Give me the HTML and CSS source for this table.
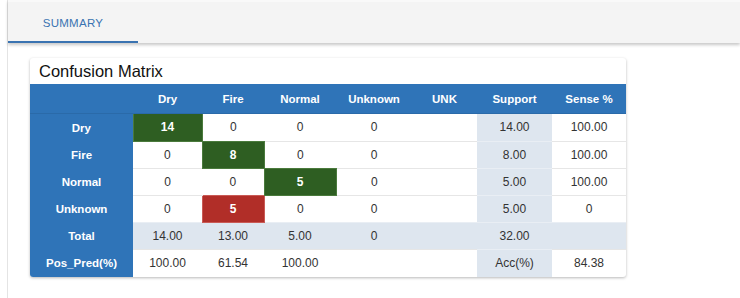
FILE: index.html
```html
<!DOCTYPE html>
<html>
<head>
<meta charset="utf-8">
<link rel="stylesheet" href="styles.css">
</head>
<body>
<div class="page">
  <div class="tabbar">
    <div class="tab">SUMMARY</div>
  </div>
  <div class="card">
    <div class="card-title">Confusion Matrix</div>
    <table class="cm">
      <colgroup>
        <col class="c-label"><col class="c-dry"><col class="c-fire"><col class="c-normal"><col class="c-unknown"><col class="c-unk"><col class="c-support"><col class="c-sense">
      </colgroup>
      <thead>
        <tr><th></th><th>Dry</th><th>Fire</th><th>Normal</th><th>Unknown</th><th>UNK</th><th>Support</th><th>Sense %</th></tr>
      </thead>
      <tbody>
        <tr><th>Dry</th><td class="good">14</td><td>0</td><td>0</td><td>0</td><td></td><td class="sup">14.00</td><td>100.00</td></tr>
        <tr><th>Fire</th><td>0</td><td class="good">8</td><td>0</td><td>0</td><td></td><td class="sup">8.00</td><td>100.00</td></tr>
        <tr><th>Normal</th><td>0</td><td>0</td><td class="good">5</td><td>0</td><td></td><td class="sup">5.00</td><td>100.00</td></tr>
        <tr><th>Unknown</th><td>0</td><td class="bad">5</td><td>0</td><td>0</td><td></td><td class="sup">5.00</td><td>0</td></tr>
        <tr class="total"><th>Total</th><td>14.00</td><td>13.00</td><td>5.00</td><td>0</td><td></td><td>32.00</td><td></td></tr>
        <tr class="last"><th>Pos_Pred(%)</th><td>100.00</td><td>61.54</td><td>100.00</td><td></td><td></td><td class="sup">Acc(%)</td><td>84.38</td></tr>
      </tbody>
    </table>
  </div>
</div>
</body>
</html>
```
FILE: styles.css
```css
html, body {
  margin: 0;
  padding: 0;
  background: #ffffff;
  font-family: "Liberation Sans", Arial, sans-serif;
}
.page {
  margin-left: 7px;
  border-left: 1px solid #e4e4e4;
  min-height: 298px;
  box-sizing: border-box;
}
.tabbar {
  height: 43px;
  background: #f4f4f4;
  border-top: 2px solid #f9f9f9;
  box-sizing: border-box;
  box-shadow: 0 2px 3px rgba(0, 0, 0, 0.22);
  display: flex;
  align-items: stretch;
}
.tab {
  width: 130px;
  display: flex;
  align-items: center;
  justify-content: center;
  font-size: 11.5px;
  letter-spacing: 0.3px;
  color: #3a73b1;
  border-bottom: 2px solid #3a73b1;
  box-sizing: border-box;
  padding-top: 2px;
}
.card {
  margin-top: 15px;
  margin-left: 22px;
  width: 596px;
  background: #fff;
  border-radius: 3px;
  box-shadow: 0 1px 3px rgba(0, 0, 0, 0.28);
  overflow: hidden;
}
.card-title {
  height: 26px;
  padding-left: 9px;
  font-size: 16.5px;
  line-height: 27px;
  color: #111;
  box-sizing: border-box;
}
.cm {
  border-collapse: collapse;
  table-layout: fixed;
  width: 596px;
  font-size: 12px;
}
.c-label { width: 103px; }
.c-dry { width: 69px; }
.c-fire { width: 62px; }
.c-normal { width: 72px; }
.c-unknown { width: 76px; }
.c-unk { width: 65px; }
.c-support { width: 75px; }
.c-sense { width: 74px; }
.cm th, .cm td {
  padding: 0;
  text-align: center;
  vertical-align: middle;
}
.cm thead th {
  height: 29px;
  background: #2f74b8;
  color: #fff;
  font-weight: 700;
  font-size: 11.5px;
  border-bottom: 1px solid #2a6aa9;
}
.cm tbody th {
  height: 27px;
  background: #2f74b8;
  color: #fff;
  font-weight: 700;
  font-size: 11.5px;
}
.cm tbody td {
  height: 27px;
  color: #333;
  border-top: 1px solid #e6e6e6;
  box-sizing: border-box;
}
.cm tbody tr:first-child td {
  border-top: none;
}
.cm td.sup {
  background: #dee6ef;
  border-top-color: #e9eef4;
}
.cm td.good {
  background: #2e5e22;
  color: #fff;
  font-weight: 700;
  border: 1px solid #4a7a3c;
}
.cm td.bad {
  background: #b12e28;
  color: #fff;
  font-weight: 700;
  border: 1px solid #c95a55;
}
.cm tr.total td {
  background: #dee6ef;
  border-top-color: #e9eef4;
}
.cm tr.last td {
  height: 28px;
}
.cm tr.last th {
  height: 28px;
}
```
